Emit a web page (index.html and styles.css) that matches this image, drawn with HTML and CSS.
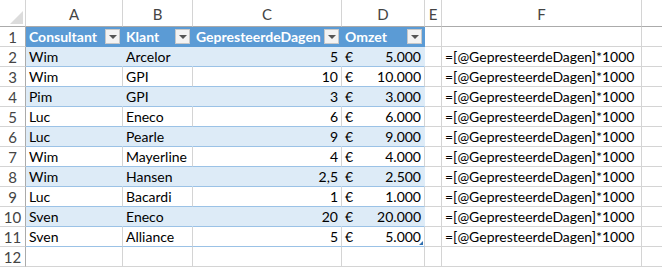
FILE: index.html
```html
<!DOCTYPE html>
<html>
<head>
<meta charset="utf-8">
<link rel="stylesheet" href="styles.css">
</head>
<body>
<div class="sheet">
  <div class="corner"><svg class="tri" width="13" height="13" viewBox="0 0 13 13"><polygon points="13,0 13,13 0,13" fill="#dcdcdc"/></svg></div>
  <div class="ch">A</div><div class="ch">B</div><div class="ch">C</div><div class="ch">D</div><div class="ch">E</div><div class="ch">F</div><div class="ch last"></div>

  <div class="rh">1</div>
  <div class="c th"><span>Consultant</span><span class="dd"></span></div>
  <div class="c th"><span>Klant</span><span class="dd"></span></div>
  <div class="c th"><span>GepresteerdeDagen</span><span class="dd"></span></div>
  <div class="c th"><span>Omzet</span><span class="dd"></span></div>
  <div class="c"></div><div class="c"></div><div class="c last"></div>

  <div class="rh">2</div>
  <div class="c t band">Wim</div><div class="c t band">Arcelor</div><div class="c t band num">5</div><div class="c t band acc"><span>€</span><span>5.000</span></div>
  <div class="c"></div><div class="c">=[@GepresteerdeDagen]*1000</div><div class="c last"></div>

  <div class="rh">3</div>
  <div class="c t">Wim</div><div class="c t">GPI</div><div class="c t num">10</div><div class="c t acc"><span>€</span><span>10.000</span></div>
  <div class="c"></div><div class="c">=[@GepresteerdeDagen]*1000</div><div class="c last"></div>

  <div class="rh">4</div>
  <div class="c t band">Pim</div><div class="c t band">GPI</div><div class="c t band num">3</div><div class="c t band acc"><span>€</span><span>3.000</span></div>
  <div class="c"></div><div class="c">=[@GepresteerdeDagen]*1000</div><div class="c last"></div>

  <div class="rh">5</div>
  <div class="c t">Luc</div><div class="c t">Eneco</div><div class="c t num">6</div><div class="c t acc"><span>€</span><span>6.000</span></div>
  <div class="c"></div><div class="c">=[@GepresteerdeDagen]*1000</div><div class="c last"></div>

  <div class="rh">6</div>
  <div class="c t band">Luc</div><div class="c t band">Pearle</div><div class="c t band num">9</div><div class="c t band acc"><span>€</span><span>9.000</span></div>
  <div class="c"></div><div class="c">=[@GepresteerdeDagen]*1000</div><div class="c last"></div>

  <div class="rh">7</div>
  <div class="c t">Wim</div><div class="c t">Mayerline</div><div class="c t num">4</div><div class="c t acc"><span>€</span><span>4.000</span></div>
  <div class="c"></div><div class="c">=[@GepresteerdeDagen]*1000</div><div class="c last"></div>

  <div class="rh">8</div>
  <div class="c t band">Wim</div><div class="c t band">Hansen</div><div class="c t band num">2,5</div><div class="c t band acc"><span>€</span><span>2.500</span></div>
  <div class="c"></div><div class="c">=[@GepresteerdeDagen]*1000</div><div class="c last"></div>

  <div class="rh">9</div>
  <div class="c t">Luc</div><div class="c t">Bacardi</div><div class="c t num">1</div><div class="c t acc"><span>€</span><span>1.000</span></div>
  <div class="c"></div><div class="c">=[@GepresteerdeDagen]*1000</div><div class="c last"></div>

  <div class="rh">10</div>
  <div class="c t band">Sven</div><div class="c t band">Eneco</div><div class="c t band num">20</div><div class="c t band acc"><span>€</span><span>20.000</span></div>
  <div class="c"></div><div class="c">=[@GepresteerdeDagen]*1000</div><div class="c last"></div>

  <div class="rh">11</div>
  <div class="c t">Sven</div><div class="c t">Alliance</div><div class="c t num">5</div><div class="c t acc endcell"><span>€</span><span>5.000</span><span class="handle"></span></div>
  <div class="c"></div><div class="c">=[@GepresteerdeDagen]*1000</div><div class="c last"></div>

  <div class="rh">12</div>
  <div class="c"></div><div class="c"></div><div class="c"></div><div class="c"></div>
  <div class="c"></div><div class="c"></div><div class="c last"></div>
</div>
</body>
</html>
```

FILE: styles.css
```css
* { box-sizing: border-box; }
html, body { margin: 0; padding: 0; background: #fff; }
body {
  font-family: Lato, "Open Sans", "Liberation Sans", sans-serif;
  font-size: 14px;
  color: #000;
  overflow: hidden;
}
.sheet {
  display: grid;
  grid-template-columns: 26px 97px 70px 149px 83px 17px 200px 20px;
  grid-template-rows: 27px repeat(12, 20px);
  width: 662px;
}
.corner {
  position: relative;
  border-right: 1px solid #d4d4d4;
  border-bottom: 1px solid #ababab;
}
.tri { position: absolute; right: 2px; bottom: 2px; }
.ch {
  border-right: 1px solid #d4d4d4;
  border-bottom: 1px solid #ababab;
  color: #444;
  text-align: center;
  line-height: 26px;
  padding-top: 1px;
  font-size: 15px;
}
.rh {
  border-right: 1px solid #ababab;
  border-bottom: 1px solid #d4d4d4;
  color: #444;
  text-align: center;
  line-height: 20px;
  font-size: 15px;
}
.c {
  border-right: 1px solid #d4d4d4;
  border-bottom: 1px solid #d4d4d4;
  padding: 0 3px;
  line-height: 20px;
  white-space: nowrap;
  overflow: visible;
}
.last { border-right: none; }
.th {
  background: #5b9bd5;
  color: #fff;
  font-weight: bold;
  border-right: 1px solid #5b9bd5;
  border-bottom: 1px solid #5b9bd5;
  display: flex;
  justify-content: space-between;
  align-items: center;
  padding-right: 2px;
  overflow: hidden;
}
.th span:first-child { line-height: 19px; }
.dd {
  flex: none;
  width: 15px;
  height: 15px;
  background: #f3f3f3;
  border: 1px solid #c8c8c8;
  position: relative;
  margin-left: 2px;
}
.dd::after {
  content: "";
  position: absolute;
  left: 3px;
  top: 5px;
  border-left: 4px solid transparent;
  border-right: 4px solid transparent;
  border-top: 4px solid #555;
}
.t { border-bottom: 1px solid #9bc2e6; }
.band { background: #ddebf7; border-right-color: #ddebf7; }
.num { text-align: right; }
.acc {
  display: flex;
  justify-content: space-between;
  position: relative;
}
.endcell .handle {
  position: absolute;
  right: 1px;
  bottom: 1px;
  width: 0;
  height: 0;
  border-left: 4px solid transparent;
  border-bottom: 4px solid #2f6fb0;
}
```
